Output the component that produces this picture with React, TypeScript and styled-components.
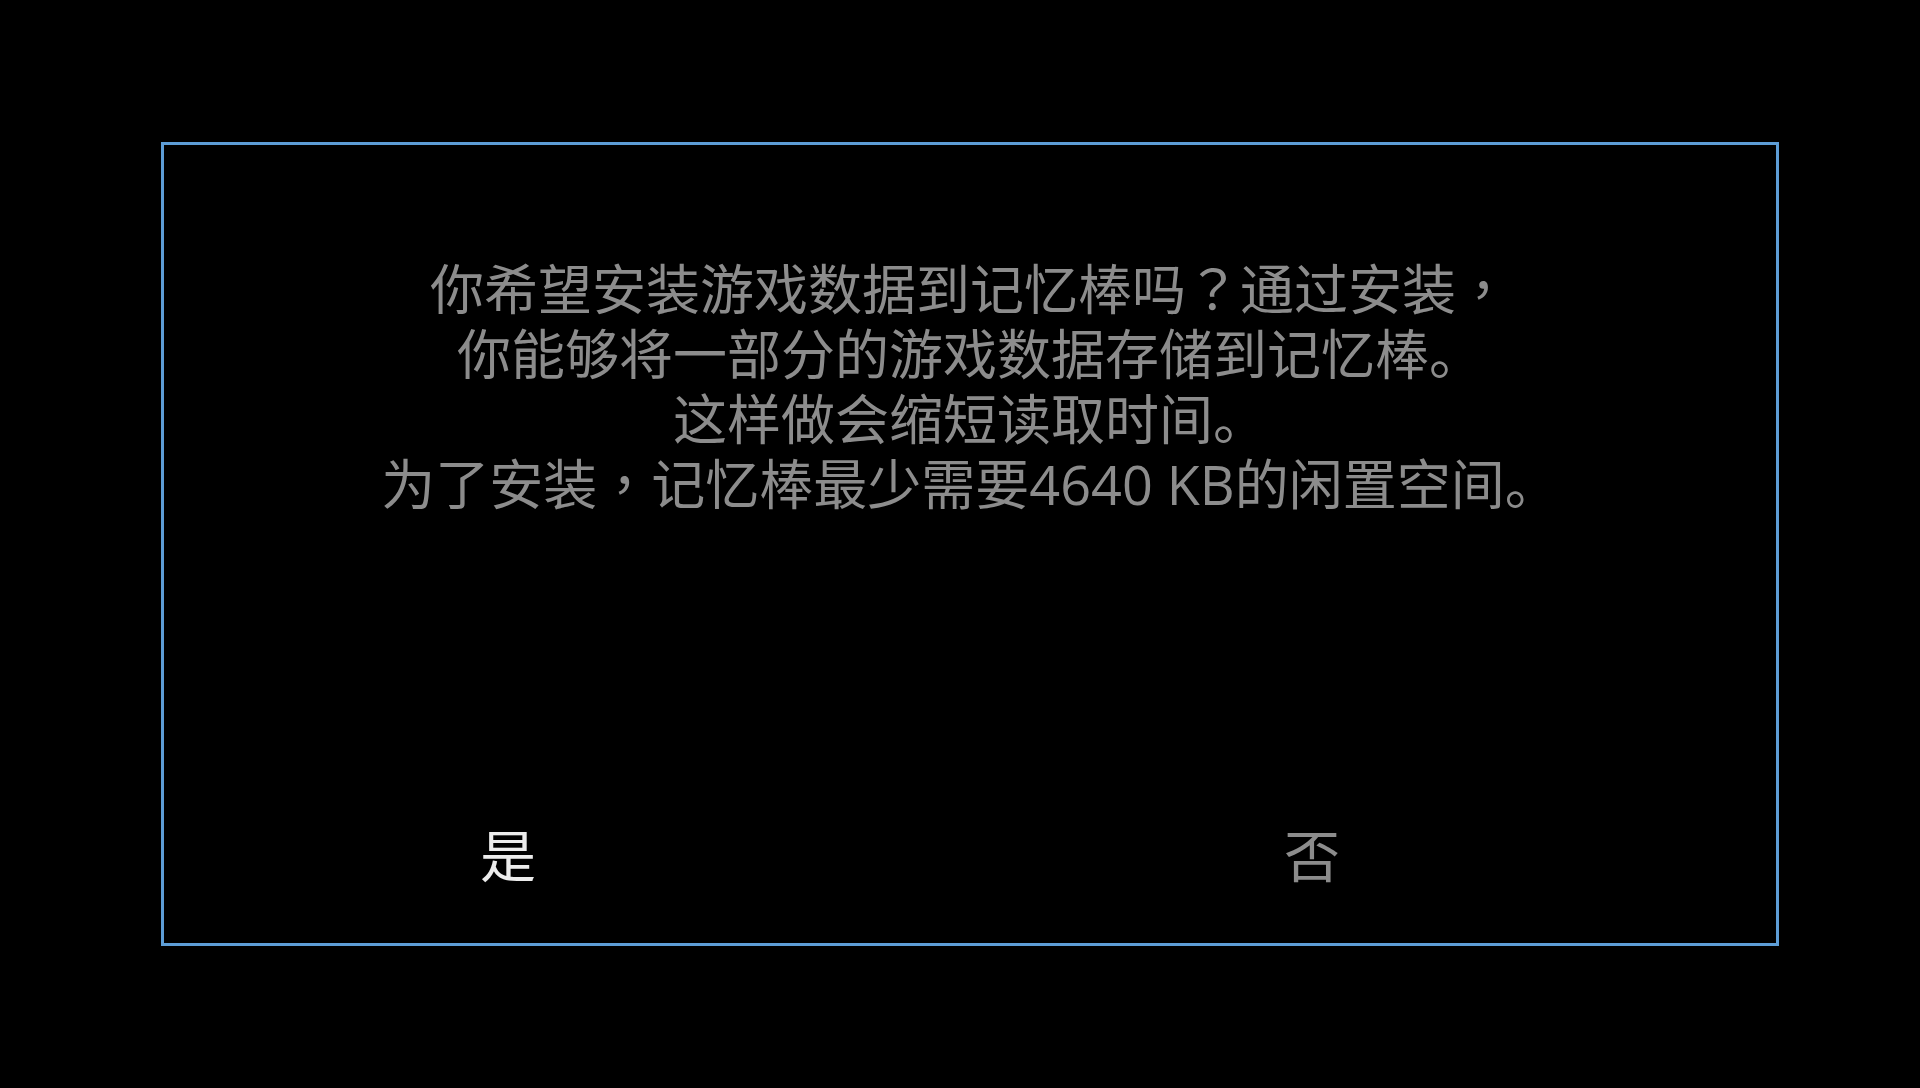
import React from 'react';
import styled, { createGlobalStyle } from 'styled-components';

const GlobalStyle = createGlobalStyle`
  html, body {
    margin: 0;
    padding: 0;
    background: #000;
  }

  body {
    font-family: "Open Sans", "Noto Sans CJK SC", sans-serif;
    -webkit-font-smoothing: antialiased;
  }
`;

const Screen = styled.div`
  width: 1920px;
  height: 1088px;
  background: #000;
  box-sizing: border-box;
  padding: 142px 0 0 161px;
`;

const Dialog = styled.div`
  width: 1618px;
  height: 804px;
  box-sizing: border-box;
  border: 3px solid #5d9dd6;
  display: flex;
  flex-direction: column;
`;

const Message = styled.div`
  padding-top: 112px;
  text-align: center;
  font-size: 54px;
  line-height: 65px;
  color: #8c8c8c;
`;

const Line = styled.div`
  white-space: nowrap;
`;

// full-width comma / question mark sit centred in their cell
const Punct = styled.span`
  font-family: "Noto Sans CJK TC", sans-serif;
  line-height: 0;
`;

const Spacer = styled.div`
  flex: 1;
`;

const ButtonRow = styled.div`
  display: flex;
  padding: 0 0 60px 244px;
  gap: 604px;
`;

const Choice = styled.button<{ $active?: boolean }>`
  width: 200px;
  height: 60px;
  padding: 0;
  border: none;
  background: transparent;
  font-family: "Noto Sans CJK SC", sans-serif;
  font-size: 56px;
  line-height: 60px;
  color: ${(p) => (p.$active ? '#ececec' : '#8c8c8c')};
  cursor: pointer;
`;

const lines = [
  '你希望安装游戏数据到记忆棒吗？通过安装，',
  '你能够将一部分的游戏数据存储到记忆棒。',
  '这样做会缩短读取时间。',
  '为了安装，记忆棒最少需要4640 KB的闲置空间。',
];

const renderLine = (text: string) =>
  text.split(/([，？])/).map((part, i) =>
    part === '，' || part === '？' ? <Punct key={i}>{part}</Punct> : part
  );

const App: React.FC = () => {
  return (
    <>
      <GlobalStyle />
      <Screen>
        <Dialog>
          <Message>
            {lines.map((text) => (
              <Line key={text}>{renderLine(text)}</Line>
            ))}
          </Message>
          <Spacer />
          <ButtonRow>
            <Choice $active>是</Choice>
            <Choice>否</Choice>
          </ButtonRow>
        </Dialog>
      </Screen>
    </>
  );
};

export default App;
